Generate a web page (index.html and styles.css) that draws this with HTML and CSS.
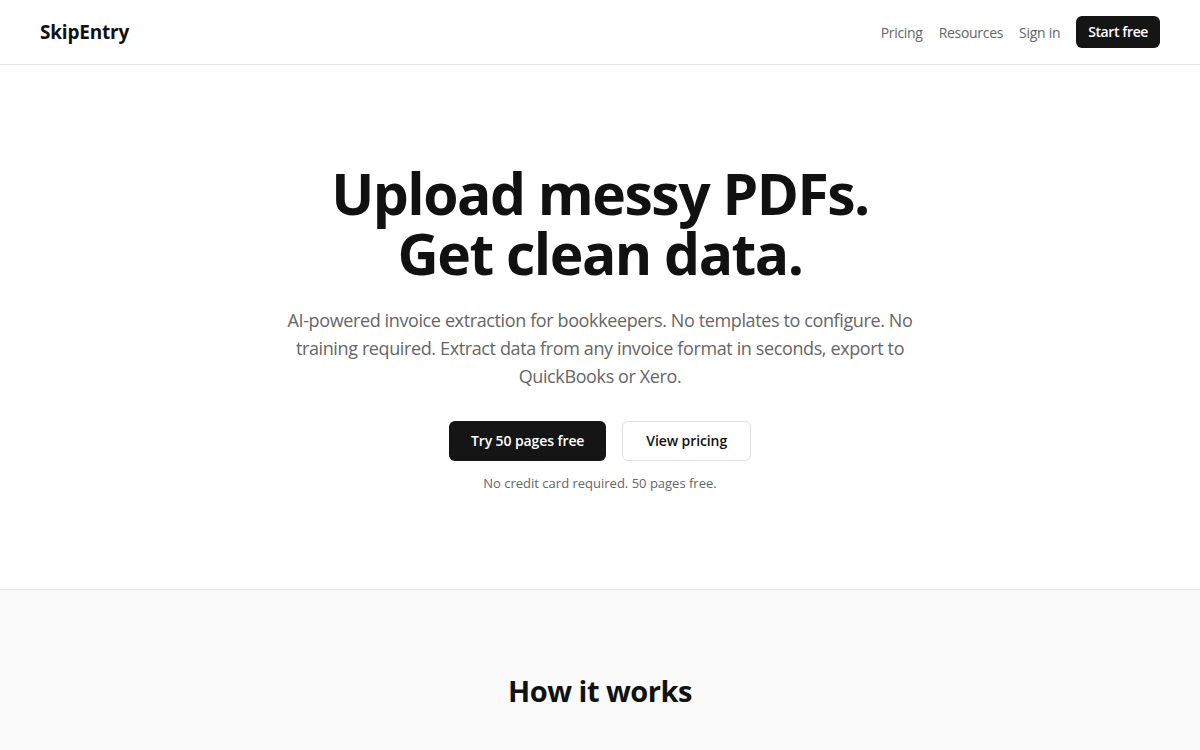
FILE: index.html
```html
<!DOCTYPE html>
<html lang="en">
<head>
    <meta charset="UTF-8">
    <meta name="viewport" content="width=device-width, initial-scale=1.0">
    <title>SkipEntry - Invoice extraction for bookkeepers</title>
    <link rel="stylesheet" href="styles.css">
</head>
<body>

    <!-- Top navigation -->
    <header class="nav">
        <a class="logo" href="#">SkipEntry</a>
        <nav class="nav-links">
            <a href="#">Pricing</a>
            <a href="#">Resources</a>
            <a href="#">Sign in</a>
            <a href="#" class="btn-small">Start free</a>
        </nav>
    </header>

    <!-- Hero -->
    <section class="hero">
        <h1>Upload messy PDFs.<br>Get clean data.</h1>
        <p class="lead">AI-powered invoice extraction for bookkeepers. No templates to configure. No training required. Extract data from any invoice format in seconds, export to QuickBooks or Xero.</p>
        <div class="actions">
            <a href="#" class="btn btn-dark">Try 50 pages free</a>
            <a href="#" class="btn btn-light">View pricing</a>
        </div>
        <p class="note">No credit card required. 50 pages free.</p>
    </section>

    <!-- How it works -->
    <section class="steps">
        <h2>How it works</h2>
    </section>

</body>
</html>
```

FILE: styles.css
```css
body, html {
    margin: 0;
    padding: 0;
    font-family: "Open Sans", "Noto Sans", sans-serif;
    color: #111;
    background: #fff;
}

a {
    text-decoration: none;
    color: inherit;
}

/* Top bar */
.nav {
    display: flex;
    justify-content: space-between;
    align-items: center;
    height: 64px;
    padding: 0 40px;
    border-bottom: 1px solid #e5e5e5;
}

.logo {
    font-size: 19px;
    font-weight: 700;
    letter-spacing: -0.2px;
}

.nav-links {
    display: flex;
    align-items: center;
    gap: 16px;
    font-size: 14px;
    letter-spacing: -0.3px;
}

.nav-links a {
    color: #666;
}

.nav-links .btn-small {
    background-color: #151515;
    color: #fff;
    font-weight: 600;
    padding: 0 12px;
    height: 32px;
    line-height: 32px;
    border-radius: 6px;
    letter-spacing: -0.4px;
}

/* Hero */
.hero {
    text-align: center;
    padding: 98px 20px 97px;
    border-bottom: 1px solid #e5e5e5;
}

.hero h1 {
    margin: 0;
    font-size: 57px;
    line-height: 60px;
    font-weight: 700;
    letter-spacing: -1.5px;
    color: #111;
}

.lead {
    max-width: 640px;
    margin: 23px auto 0;
    font-size: 18px;
    line-height: 28px;
    letter-spacing: -0.38px;
    color: #666;
}

.actions {
    display: flex;
    justify-content: center;
    gap: 16px;
    margin-top: 31px;
}

.btn {
    display: inline-block;
    height: 40px;
    line-height: 40px;
    padding: 0 22px;
    border-radius: 6px;
    font-size: 14px;
    font-weight: 600;
    letter-spacing: -0.1px;
    box-sizing: border-box;
}

.btn-dark {
    background-color: #151515;
    color: #fff;
}

.btn-light {
    background-color: #fff;
    color: #111;
    border: 1px solid #e0e0e0;
    line-height: 38px;
    padding: 0 23px;
}

.note {
    margin: 13px 0 0;
    font-size: 13px;
    color: #666;
}

/* How it works */
.steps {
    background-color: #fafafa;
    padding: 81px 20px 60px;
    text-align: center;
}

.steps h2 {
    margin: 0;
    font-size: 29px;
    font-weight: 700;
    letter-spacing: -0.5px;
}
```
